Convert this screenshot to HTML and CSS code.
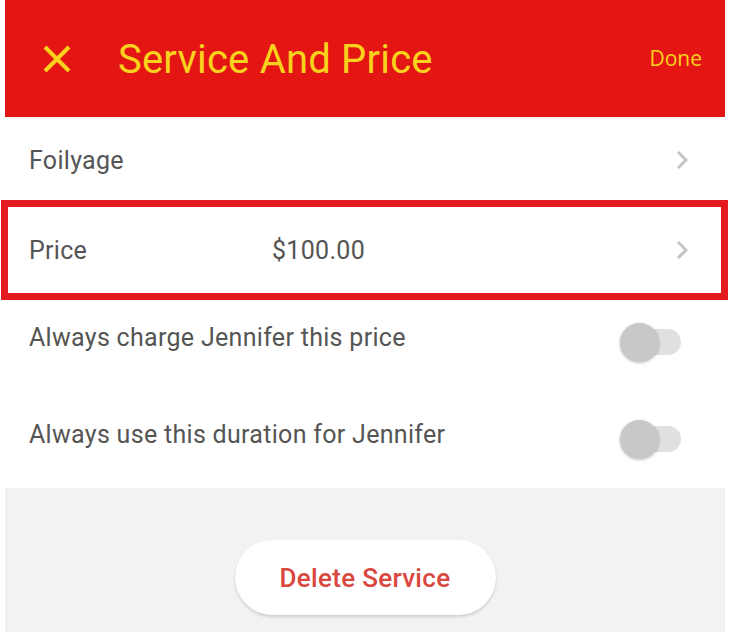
FILE: index.html
```html
<!DOCTYPE html>
<html>
<head>
<meta charset="utf-8">
<link rel="stylesheet" href="styles.css">
</head>
<body>
<div class="screen">
  <header class="topbar">
    <div class="close">
      <svg width="28" height="28" viewBox="0 0 28 28"><path d="M2 2 L26 26 M26 2 L2 26" stroke="#f8d21c" stroke-width="4" stroke-linecap="butt"/></svg>
    </div>
    <h1 class="title">Service And Price</h1>
    <span class="done">Done</span>
  </header>
  <div class="list">
    <div class="row nav">
      <span class="label">Foilyage</span>
      <svg class="chev" width="12" height="20" viewBox="0 0 12 20"><path d="M2 2 L10 10 L2 18" fill="none" stroke="#c4c4c4" stroke-width="3"/></svg>
    </div>
    <div class="row nav price">
      <span class="label fixed">Price</span>
      <span class="value">$100.00</span>
      <svg class="chev" width="12" height="20" viewBox="0 0 12 20"><path d="M2 2 L10 10 L2 18" fill="none" stroke="#c4c4c4" stroke-width="3"/></svg>
    </div>
    <div class="row toggle-row first">
      <span class="label">Always charge Jennifer this price</span>
      <span class="switch"><span class="track"></span><span class="knob"></span></span>
    </div>
    <div class="row toggle-row">
      <span class="label">Always use this duration for Jennifer</span>
      <span class="switch"><span class="track"></span><span class="knob"></span></span>
    </div>
  </div>
  <div class="footer">
    <button class="delete">Delete Service</button>
  </div>
</div>
</body>
</html>
```
FILE: styles.css
```css
html, body {
  margin: 0;
  padding: 0;
  background: #ffffff;
}
body {
  font-family: Roboto, "Liberation Sans", sans-serif;
  width: 729px;
  height: 632px;
  overflow: hidden;
}
.screen {
  margin-left: 5px;
  width: 720px;
}
.topbar {
  height: 117px;
  background: #e41614;
  display: flex;
  align-items: center;
  color: #f8d21c;
}
.close {
  width: 28px;
  height: 28px;
  margin-left: 38px;
  display: flex;
}
.title {
  margin: 0 0 0 47px;
  font-weight: 400;
  font-size: 40px;
  flex: 1;
  letter-spacing: 0.2px;
  position: relative;
  top: 1px;
}
.done {
  font-family: "Open Sans", "Noto Sans", sans-serif;
  font-size: 21px;
  margin-right: 23px;
  position: relative;
  top: -1px;
}
.list {
  display: flex;
  flex-direction: column;
}
.row {
  display: flex;
  align-items: center;
  padding-left: 24px;
  font-size: 25px;
  letter-spacing: 0.3px;
  color: #555555;
}
.row.nav {
  height: 86px;
  padding-right: 37px;
}
.row.price {
  height: 94px;
  position: relative;
}
.row.price::after {
  content: "";
  position: absolute;
  top: -3px;
  bottom: -3px;
  left: -4px;
  right: -3px;
  border: 7px solid #e41b1e;
}
.label {
  flex: 1;
}
.label.fixed {
  flex: 0 0 243px;
}
.value {
  flex: 1;
}
.chev {
  display: block;
}
.toggle-row {
  height: 97px;
  padding-right: 44px;
}
.toggle-row.first {
  margin-top: -3px;
}
.toggle-row .label {
  position: relative;
  top: -5px;
}
.switch {
  position: relative;
  width: 61px;
  height: 39px;
  display: block;
}
.track {
  position: absolute;
  right: 0;
  top: 6px;
  width: 54px;
  height: 26px;
  border-radius: 13px;
  background: #e0e0e0;
}
.knob {
  position: absolute;
  left: 0;
  top: 0;
  width: 39px;
  height: 39px;
  border-radius: 50%;
  background: #c8c8c8;
  box-shadow: 0 1px 3px rgba(0,0,0,0.25);
}
.footer {
  background: #f2f2f2;
  height: 150px;
  display: flex;
  justify-content: center;
  align-items: flex-start;
  padding-top: 52px;
  box-sizing: border-box;
}
.delete {
  width: 261px;
  height: 75px;
  border: none;
  border-radius: 38px;
  background: #ffffff;
  box-shadow: 0 2px 3px rgba(0,0,0,0.15);
  color: #d9473e;
  font-family: Roboto, "Liberation Sans", sans-serif;
  font-weight: 500;
  font-size: 26px;
  letter-spacing: 0.3px;
  padding: 0;
}
```
